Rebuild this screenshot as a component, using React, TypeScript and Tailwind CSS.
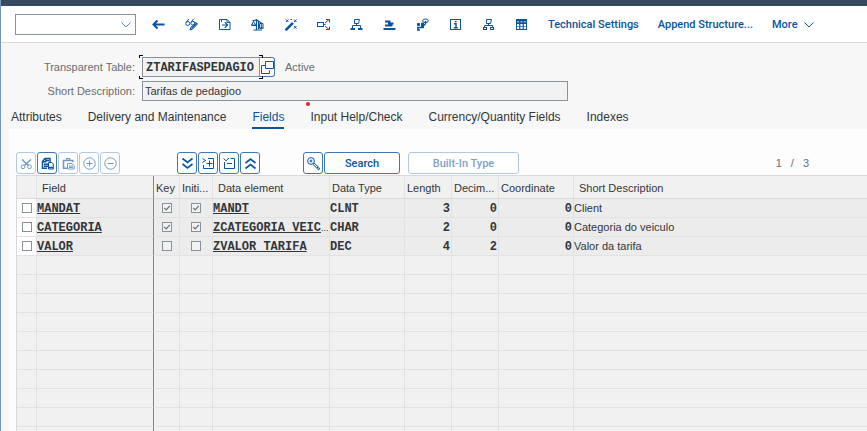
import React from "react";

type IconName =
  | "back" | "display" | "other" | "check" | "activate" | "where" | "hier" | "graph"
  | "figure" | "info" | "tree" | "contents" | "cut" | "copy" | "paste" | "plus" | "minus"
  | "down" | "insert" | "remove" | "up" | "key" | "help";

const shapes: Record<IconName, React.ReactNode> = {
  back: <path d="M1 6.5H12.5M5.5 2.5L1.5 6.5L5.5 10.5" strokeWidth="2" />,
  display: (
    <>
      <circle cx="2.8" cy="5.5" r="2" />
      <circle cx="7.8" cy="5.2" r="1.9" />
      <path d="M1 4.5L3.8 1M6.2 3.8L8.8 .8" />
      <path d="M5 12L5.8 9.5L10.8 4.3L12.5 6L7.5 11.2Z" />
      <path d="M6.5 10.5L11.7 5.2" strokeWidth="1.4" />
    </>
  ),
  other: (
    <>
      <path d="M3.5 4V1.5H1.5V11.5H12V4.5L9 1.5H3.5M9 1.5V4.5H12" />
      <path d="M4 7H9.5M6.8 4.2L9.6 7L6.8 9.8" strokeWidth="1.2" />
    </>
  ),
  check: (
    <>
      <path d="M5.5 1V11.5M2.5 12H11M1.5 2.8L5.5 2L10.5 5" strokeWidth="1.2" />
      <path d="M.5 7L2.5 3.5L4.5 7ZM8.5 10V5.5H12V10Z" />
      <path d="M.5 7.5H5M7.5 3.5V11M8.5 10.3H12.5M10.3 5.5V10" />
    </>
  ),
  activate: (
    <>
      <path d="M1 12L8.5 4.5M2.2 12.5L9.4 5.4" strokeWidth="1.3" />
      <path d="M2 1.5L4.5 4M4.5 1.5L2 4M6.5 1.5H8M10 1.5L12.5 4M12.5 1.5L10 4M10 8L12.5 10.5M12.5 8L10 10.5" />
    </>
  ),
  where: (
    <>
      <rect x=".5" y="4.5" width="6" height="4" />
      <path d="M7 6.5H8.5M8 5L12 1.5M9 1.5H12.5V4.5M8 8L12 11.5M9 11.5H12.5V8.5" />
    </>
  ),
  hier: (
    <>
      <path d="M4.5 1.5H9.5L8.5 5.5H4.5Z" />
      <path d="M6.5 6V8M2.5 10V7.5H10.5V10" />
      <path d="M.5 11H5M8 11H12.5" strokeWidth="2" />
    </>
  ),
  graph: (
    <>
      <path d="M.5 11H12.5" strokeWidth="2" />
      <path d="M2 3.5H7.5M5 5.5H10.5M2 7.5H9.5" strokeWidth="1.8" />
    </>
  ),
  figure: (
    <>
      <ellipse cx="9.5" cy="2.8" rx="2.8" ry="1.8" />
      <path d="M9.5 3V6M8 7.5L9.5 6" strokeWidth="1.3" />
      <path d="M1.5 5.5H3.5V7.5H1.5ZM5.5 5V9.5H7.5V5Z" fill="currentColor" />
      <path d="M1 9.5H7.5M2 10V12M1 12H4" strokeWidth="1.5" />
    </>
  ),
  info: (
    <>
      <rect x="1.5" y="1.5" width="10" height="10" />
      <path d="M5 5.7H7V9.5M4.8 9.7H8.8" strokeWidth="1.4" />
      <path d="M5.8 2.8H7.6V4.3H5.8Z" fill="currentColor" stroke="none" />
    </>
  ),
  tree: (
    <>
      <path d="M4.5 1.5H9.5L8.5 5.5H4.5Z" />
      <path d="M6.5 5.5V7.5M2.5 9V7.5H10.5V9" />
      <rect x="1.5" y="9.5" width="3" height="2" />
      <rect x="8.5" y="9.5" width="3" height="2" />
    </>
  ),
  contents: (
    <>
      <rect x="1.5" y="1.5" width="10" height="10" />
      <path d="M1.5 2.5H12M2 5.2H11" strokeWidth="1.8" />
      <path d="M4.8 2V11M8.2 2V11" strokeWidth="1.2" />
      <path d="M2 8.5H11" opacity=".6" />
    </>
  ),
  cut: (
    <>
      <circle cx="3" cy="9.8" r="1.9" />
      <circle cx="9.5" cy="9.8" r="1.9" />
      <path d="M2 2.5L8.5 8.5M11 2.5L4.5 8.5" strokeWidth="1.5" />
    </>
  ),
  copy: (
    <>
      <path d="M6 11.3H1.5V4.5L4 1.5H9V5" strokeWidth="1.5" />
      <path d="M1.5 4.8H4.8V2M3 7.3H7M3 9.3H7M5 3.5H8" strokeWidth="1.4" />
      <path d="M7.5 5.5H11L12.3 7V12H7.5Z" />
      <path d="M8 10.5H12" strokeWidth="1.5" />
    </>
  ),
  paste: (
    <>
      <path d="M5 11.3H1.5V3.5H4M8.5 3.5H10.8V5M4 3.5H8.5" strokeWidth="1.6" />
      <path d="M4.8 3V1.5H7.7V3" strokeWidth="1.2" />
      <path d="M5.5 6.5H10L12.2 8.5V12H5.5ZM7 9H11M7 10.5H11" />
    </>
  ),
  plus: (
    <>
      <circle cx="6.5" cy="6.5" r="5.7" />
      <path d="M6.5 3.5V9.5M3.5 6.5H9.5" />
    </>
  ),
  minus: (
    <>
      <circle cx="6.5" cy="6.5" r="5.7" />
      <path d="M3.5 6.5H9.5" />
    </>
  ),
  down: <path d="M1.5 1.5L6.5 5.5L11.5 1.5M1.5 7L6.5 11L11.5 7" strokeWidth="1.7" />,
  up: <path d="M1.5 6L6.5 2L11.5 6M1.5 11.5L6.5 7.5L11.5 11.5" strokeWidth="1.7" />,
  insert: (
    <>
      <path d="M6 1.5H11.5V11.5H1.5V8M7.5 3.5V9.5M4.5 6.5H10.5" />
      <path d="M.5 1.5L3.5 3.5L.5 5.5" />
    </>
  ),
  remove: (
    <>
      <path d="M7.5 1.5H11.5V11.5H1.5V5M4 6.5H9" />
      <path d="M.5 1.5L3 3.8L6 1" />
    </>
  ),
  key: (
    <>
      <circle cx="4" cy="4" r="3.4" />
      <circle cx="4" cy="4" r="1" />
      <path d="M5.5 7L11 12.3H12.4V11L7 5.8M8.5 9.5L9.5 8.5M10 11L11 10" />
    </>
  ),
  help: (
    <>
      <path d="M4.5 .5H12.5V7.5H4.5Z" />
      <path d="M4 4.5H.5V12.5H8.5V9.5" />
    </>
  ),
};

function Icon({ name }: { name: IconName }) {
  return (
    <svg className="h-[13px] w-[13px] shrink-0" viewBox="0 0 13 13" fill="none" stroke="currentColor" aria-hidden="true">
      {shapes[name]}
    </svg>
  );
}

function Chevron() {
  return (
    <svg className="h-[6px] w-[10px]" viewBox="0 0 10 6" fill="none" stroke="currentColor" aria-hidden="true">
      <path d="M.5 .5L5 5L9.5 .5" />
    </svg>
  );
}

const appActions: [IconName, string][] = [
  ["back", "Back"],
  ["display", "Display/Change"],
  ["other", "Other object"],
  ["check", "Check"],
  ["activate", "Activate"],
  ["where", "Where-used list"],
  ["hier", "Display object list"],
  ["graph", "Graphic"],
  ["figure", "Hierarchy"],
  ["info", "Documentation"],
  ["tree", "Append structures"],
  ["contents", "Contents"],
];

const tabs = ["Attributes", "Delivery and Maintenance", "Fields", "Input Help/Check", "Currency/Quantity Fields", "Indexes"];

const rows = [
  { field: "MANDAT", key: true, init: true, element: "MANDT", more: false, type: "CLNT", length: 3, decimals: 0, text: "Client" },
  { field: "CATEGORIA", key: true, init: true, element: "ZCATEGORIA_VEIC", more: true, type: "CHAR", length: 2, decimals: 0, text: "Categoria do veiculo" },
  { field: "VALOR", key: false, init: false, element: "ZVALOR_TARIFA", more: false, type: "DEC", length: 4, decimals: 2, text: "Valor da tarifa" },
];

const columns = [
  { label: "", head: "" },
  { label: "Field", head: "pl-[5px]" },
  { label: "Key", head: "pl-[2px]" },
  { label: "Initi...", head: "pl-[2px]" },
  { label: "Data element", head: "pl-[5px]" },
  { label: "Data Type", head: "pl-[2px]" },
  { label: "Length", head: "pl-[2px]" },
  { label: "Decim...", head: "pl-[2px]" },
  { label: "Coordinate", head: "pl-[2px]" },
  { label: "Short Description", head: "pl-[5px]" },
];

function edge(index: number) {
  if (index === 1) return "border-r border-r-[#858585]";
  if (index === columns.length - 1) return "";
  return "border-r border-r-[#e2e2e2]";
}

function Tick({ label, checked = false, plain = false }: { label: string; checked?: boolean; plain?: boolean }) {
  return (
    <label className="relative mx-auto block h-[10px] w-[10px]">
      <input
        type="checkbox"
        aria-label={label}
        defaultChecked={checked}
        className={`peer block h-[10px] w-[10px] appearance-none border border-[#89919a] ${plain ? "bg-white" : "bg-[#f2f2f2]"}`}
      />
      <svg className="pointer-events-none absolute inset-0 hidden h-[10px] w-[10px] text-[#6a6d70] peer-checked:block" viewBox="0 0 10 10" fill="none" stroke="currentColor" aria-hidden="true">
        <path d="M2.2 4.8L4.2 6.8L7.8 2.8" strokeWidth="1.2" />
      </svg>
    </label>
  );
}

function ToolButton({ name, label, disabled = false }: { name: IconName; label: string; disabled?: boolean }) {
  return (
    <button
      type="button"
      aria-label={label}
      disabled={disabled}
      className="flex h-[22px] w-5 items-center justify-center rounded-[3px] border border-[#3f78b5] bg-white text-[#0854a0] disabled:border-[#b1c9e2] disabled:text-[#6f9ac8]"
    >
      <Icon name={name} />
    </button>
  );
}

const boldLink = "pt-0.5 text-[11px] font-medium font-[Roboto,'Liberation_Sans',sans-serif]";

export default function App() {
  return (
    <div className="flex h-screen flex-col overflow-hidden border-l border-[#7396bd] bg-[#f7f7f7] font-['Liberation_Sans',Arial,sans-serif] text-[11px] leading-4 text-[#32363a]">
      <div className="-ml-px h-[6px] shrink-0 bg-[#354a5f]" />

      <header className="flex h-[37px] shrink-0 items-center border-b border-[#d9d9d9] bg-white pl-[14px] text-[#0854a0]">
        <div className="relative mr-[6px] shrink-0">
          <select aria-label="Command" className="block h-[21px] w-[121px] appearance-none border border-[#89919a] bg-white">
            <option></option>
          </select>
          <span className="pointer-events-none absolute top-2 right-[5px] text-[#5b8dc0]"><Chevron /></span>
        </div>
        {appActions.map(([icon, label]) => (
          <button key={icon} type="button" aria-label={label} className="flex h-6 w-[33px] shrink-0 items-center justify-center">
            <Icon name={icon} />
          </button>
        ))}
        <div className="ml-[10px] flex gap-[19px] whitespace-nowrap">
          <button type="button" className={boldLink}>Technical Settings</button>
          <button type="button" className={boldLink}>Append Structure...</button>
          <button type="button" className={`flex items-center gap-[6px] ${boldLink}`}>More <Chevron /></button>
        </div>
      </header>

      <section className="flex shrink-0 flex-col gap-1 pt-[14px]">
        <div className="flex h-5 items-center">
          <label htmlFor="table" className="w-[134px] shrink-0 text-right text-[#6a6d70]">Transparent Table:</label>
          <div className="relative ml-[7px]">
            <input id="table" readOnly defaultValue="ZTARIFASPEDAGIO" className="block h-5 w-[118px] border border-[#89919a] bg-[#f2f2f2] pt-0.5 pl-[3px] font-['Liberation_Mono',monospace] text-xs font-bold" />
            <span className="pointer-events-none absolute -top-[2px] -left-[3px] h-[3px] w-1 border-t border-l border-black" />
            <span className="pointer-events-none absolute -top-[2px] -right-[3px] h-[3px] w-1 border-t border-r border-black" />
            <span className="pointer-events-none absolute -bottom-[2px] -left-[3px] h-[3px] w-1 border-b border-l border-black" />
            <span className="pointer-events-none absolute -right-[3px] -bottom-[2px] h-[3px] w-1 border-r border-b border-black" />
          </div>
          <button type="button" aria-label="Value help" className="flex h-5 w-[15px] items-center justify-center rounded-r-[3px] border border-l-0 border-[#3f78b5] bg-white text-[#0854a0]">
            <Icon name="help" />
          </button>
          <span className="ml-[10px] text-[#6a6d70]">Active</span>
        </div>
        <div className="flex h-5 items-center">
          <label htmlFor="description" className="w-[134px] shrink-0 text-right text-[#6a6d70]">Short Description:</label>
          <div className="relative ml-[7px]">
            <input id="description" readOnly defaultValue="Tarifas de pedagioo" className="block h-5 w-[426px] border border-[#89919a] bg-[#f2f2f2] pl-[2px]" />
            <span className="absolute top-[21px] left-[164px] h-1 w-1 rounded-full bg-[#ed1c24]" />
          </div>
        </div>
      </section>

      <nav role="tablist" className="mt-1 flex h-6 shrink-0 gap-[26px] pl-[10px] text-xs leading-4 whitespace-nowrap">
        {tabs.map((tab) => (
          <button
            key={tab}
            type="button"
            role="tab"
            aria-selected={tab === "Fields"}
            className="flex h-6 items-start border-b-2 border-transparent pt-1 aria-selected:border-[#0854a0] aria-selected:text-[#0854a0]"
          >
            {tab}
          </button>
        ))}
      </nav>

      <main className="ml-2 flex min-h-0 flex-1 flex-col bg-[#fdfdfd] pt-[23px] pl-[7px]">
        <div className="flex h-[23px] shrink-0 items-start">
          <div className="flex gap-px">
            <ToolButton name="cut" label="Cut" disabled />
            <ToolButton name="copy" label="Copy" />
            <ToolButton name="paste" label="Paste" disabled />
            <ToolButton name="plus" label="Insert row" disabled />
            <ToolButton name="minus" label="Delete row" disabled />
          </div>
          <div className="ml-[57px] flex gap-px">
            <ToolButton name="down" label="Expand all" />
            <ToolButton name="insert" label="Expand include" />
            <ToolButton name="remove" label="Collapse include" />
            <ToolButton name="up" label="Collapse all" />
          </div>
          <div className="ml-[43px] flex gap-px">
            <ToolButton name="key" label="Foreign keys" />
            <button type="button" className={`h-[22px] w-[76px] rounded-[3px] border border-[#3f78b5] bg-white text-[#0854a0] ${boldLink}`}>Search</button>
          </div>
          <button type="button" disabled className={`ml-2 h-[22px] w-[111px] rounded-[3px] border border-[#b1c9e2] bg-white text-[#7ba2cb] ${boldLink}`}>Built-In Type</button>
          <div className="mr-[58px] ml-auto flex h-[22px] items-center gap-[9px] text-[#6a6d70]">
            <span>1</span><span>/</span><span>3</span>
          </div>
        </div>

        <div className="min-h-0 flex-1 overflow-hidden border-t border-l border-[#d9d9d9] bg-[#f1f1f1]">
          <table className="w-full table-fixed border-separate border-spacing-0 whitespace-nowrap">
            <colgroup>
              <col className="w-5" />
              <col className="w-[117px]" />
              <col className="w-[26px]" />
              <col className="w-[33px]" />
              <col className="w-[117px]" />
              <col className="w-[75px]" />
              <col className="w-[47px]" />
              <col className="w-[47px]" />
              <col className="w-[75px]" />
              <col />
            </colgroup>
            <thead>
              <tr className="h-[23px]">
                {columns.map((column, i) => (
                  <th key={i} scope="col" className={`border-b border-b-[#d9d9d9] pt-0.5 text-left font-normal ${column.head} ${edge(i)}`}>{column.label}</th>
                ))}
              </tr>
            </thead>
            <tbody>
              {rows.map((row) => (
                <tr key={row.field} className="h-[19px] bg-[#ececec] font-['Liberation_Mono',monospace] text-xs leading-4 font-bold [&>td]:border-b [&>td]:border-b-[#e2e2e2]">
                  <td className={`bg-white ${edge(0)}`}><Tick label={`Select ${row.field}`} plain /></td>
                  <td className={`pt-0.5 ${edge(1)}`}><span className="underline underline-offset-1">{row.field}</span></td>
                  <td className={edge(2)}><Tick label={`${row.field} key`} checked={row.key} /></td>
                  <td className={edge(3)}><Tick label={`${row.field} initial value`} checked={row.init} /></td>
                  <td className={`pt-0.5 ${edge(4)}`}>
                    <span className="underline underline-offset-1">{row.element}</span>
                    {row.more && <span className="font-['Liberation_Sans',Arial,sans-serif] text-[9px] font-normal">...</span>}
                  </td>
                  <td className={`pt-0.5 ${edge(5)}`}>{row.type}</td>
                  <td className={`pt-0.5 pr-px text-right ${edge(6)}`}>{row.length}</td>
                  <td className={`pt-0.5 pr-px text-right ${edge(7)}`}>{row.decimals}</td>
                  <td className={`pt-0.5 pr-px text-right ${edge(8)}`}>0</td>
                  <td className="font-['Liberation_Sans',Arial,sans-serif] text-[11px] font-normal">{row.text}</td>
                </tr>
              ))}
              {Array.from({ length: 12 }, (_, r) => (
                <tr key={r} className="h-[19px]">
                  {columns.map((_, i) => (
                    <td key={i} className={`border-b border-b-[#e2e2e2] ${edge(i)}`} />
                  ))}
                </tr>
              ))}
            </tbody>
          </table>
        </div>
      </main>
    </div>
  );
}
